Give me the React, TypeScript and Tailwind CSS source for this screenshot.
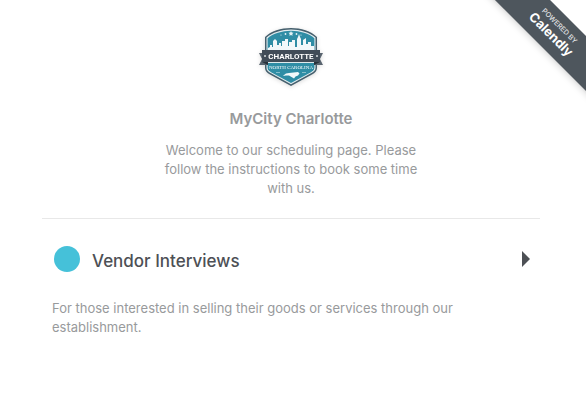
function Logo() {
  return (
    <svg
      width="80"
      height="72"
      viewBox="0 0 80 72"
      role="img"
      aria-label="Charlotte, North Carolina"
      className="drop-shadow-sm"
    >
      <path
        d="M40 8 C50 8 60 11 66 17 L66 48 C66 51 64 53 61 54.5 L40 66 L19 54.5 C16 53 14 51 14 48 L14 17 C20 11 30 8 40 8 Z"
        fill="#46606e"
      />
      <path
        d="M40 9.5 C49 9.5 59 12.5 64.5 17.6 L64.5 48 C64.5 50.5 62.5 52 60 53.3 L40 64.3 L20 53.3 C17.5 52 15.5 50.5 15.5 48 L15.5 17.6 C21 12.5 31 9.5 40 9.5 Z"
        fill="#e3edf0"
      />
      <path
        d="M40 10.7 C49 10.7 58 13.5 63.4 18.2 L63.4 48 C63.4 50 61.5 51.2 59.5 52.4 L40 63 L20.5 52.4 C18.5 51.2 16.6 50 16.6 48 L16.6 18.2 C22 13.5 31 10.7 40 10.7 Z"
        fill="#2f8da5"
      />
      <g fill="#e3f1f4">
        <path d="M40 11 l.8 1.6 1.7 .2 -1.2 1.2 .3 1.8 -1.6 -.9 -1.6 .9 .3 -1.8 -1.2 -1.2 1.7 -.2 Z" />
        <circle cx="34.5" cy="14" r="0.9" />
        <circle cx="45.5" cy="14" r="0.9" />
        <circle cx="30" cy="15" r="0.6" />
        <circle cx="50" cy="15" r="0.6" />
      </g>
      <path
        d="M17 31 V28 L19 27 V25 H21 V27 H22 V21 L24 19 L26 21 V25 H28 V23 H30 V26 H31 V21 H34 V19 H37 V26 H38 V22 H41 V20 H44 V27 H46 V19 L47 17 L48 14 L49 17 L50 19 V25 H52 V20 L55 18 V24 H57 V22 H60 V26 H63 V31 Z"
        fill="#f2f8fa"
      />
      <path
        d="M8 33 H17 V45 H8 L11 39 Z M72 33 H63 V45 H72 L69 39 Z"
        fill="#59646f"
      />
      <path d="M11 30 H69 V42 H11 Z" fill="#414c58" />
      <path d="M11 42 H17 V45 Z M69 42 H63 V45 Z" fill="#27313a" />
      <path d="M17 42 H63 V43 H17 Z" fill="#dfeaed" />
      <circle cx="14" cy="36" r="1" fill="#d5dadd" />
      <circle cx="66" cy="36" r="1" fill="#d5dadd" />
      <text
        x="40"
        y="39"
        textAnchor="middle"
        fill="#ffffff"
        fontSize="8"
        fontWeight="700"
        fontFamily="Roboto, sans-serif"
      >
        CHARLOTTE
      </text>
      <text
        x="40"
        y="49"
        textAnchor="middle"
        fill="#ffffff"
        fontSize="5"
        fontWeight="400"
        fontFamily="'Liberation Serif', serif"
      >
        NORTH CAROLINA
      </text>
      <path
        d="M33 55 L35 53.5 L38 53 L47 52 L48.5 53.5 L47 55.5 L44.5 56.5 L43 58.5 L40.5 57 L38 55.5 L35 55.5 L32 56 Z"
        fill="#f2f8fa"
      />
      <path d="M25 52 H29 V53 H25 Z M51 52 H55 V53 H51 Z" fill="#84bdca" />
    </svg>
  );
}

function Ribbon() {
  return (
    <div className="absolute top-0 right-0 w-28 h-28 overflow-hidden">
      <a
        href="#calendly"
        className="absolute top-3 -right-12 w-40 h-[39px] rotate-45 flex flex-col items-center justify-center bg-[#4e565d] text-white shadow-md"
      >
        <span className="text-[7px] leading-[8px] font-medium text-[#e2e4e6]">
          POWERED BY
        </span>
        <span className="text-[13px] leading-[15px] font-bold">Calendly</span>
      </a>
    </div>
  );
}

export default function App() {
  const events = [
    {
      name: "Vendor Interviews",
      description:
        "For those interested in selling their goods or services through our establishment.",
    },
  ];

  return (
    <div className="relative min-h-screen bg-white pt-5 pl-[42px] pr-[46px] font-['Inter',sans-serif] text-[13px] leading-[19px] text-[#989a9c]">
      <Ribbon />

      <header className="flex flex-col items-center pb-5 border-b border-[#e8e8e8] text-center">
        <Logo />
        <h1 className="mt-4 text-[15px] leading-[21px] font-semibold">
          MyCity Charlotte
        </h1>
        <p className="mt-3 max-w-[260px]">
          Welcome to our scheduling page. Please follow the instructions to book
          some time with us.
        </p>
      </header>

      <main>
        {events.map((e) => (
          <a
            key={e.name}
            href="#vendor-interviews"
            className="block px-[10px] pt-[27px]"
          >
            <div className="flex items-center">
              <span className="ml-[2px] size-[26px] rounded-full bg-[#45c1d9]" />
              <h2 className="ml-3 flex-1 pt-1 text-[17px] leading-[22px] font-medium text-[#4d5055]">
                {e.name}
              </h2>
              <svg width="8" height="16" viewBox="0 0 8 16" aria-hidden="true">
                <path d="M0 0 L8 8 L0 16 Z" fill="#4d5055" />
              </svg>
            </div>
            <p className="mt-[27px] max-w-[420px]">{e.description}</p>
          </a>
        ))}
      </main>
    </div>
  );
}
